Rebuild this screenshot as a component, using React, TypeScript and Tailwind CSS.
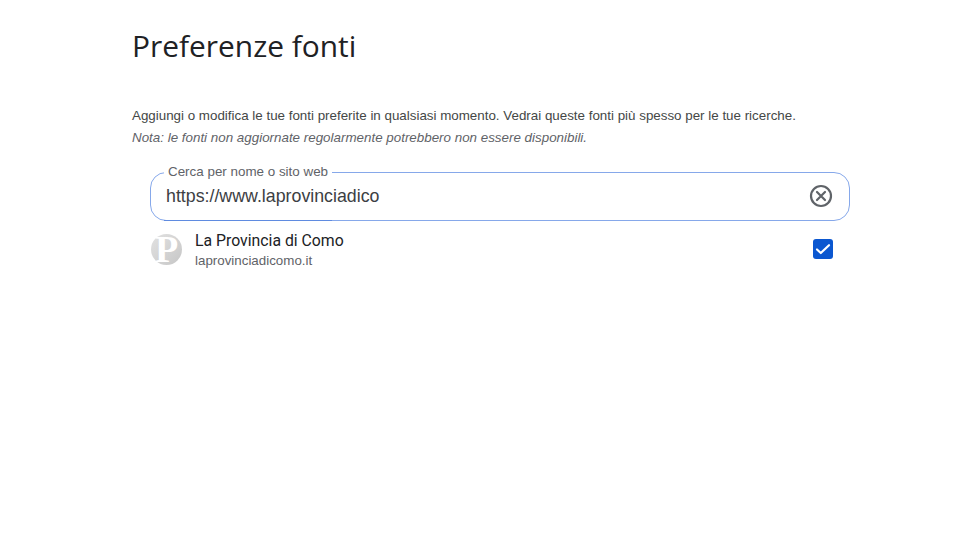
import React from 'react'

function ClearIcon() {
  return (
    <svg width="24" height="24" viewBox="0 0 24 24" fill="none" stroke="#5f6368" strokeWidth="2.2" strokeLinecap="round">
      <circle cx="12" cy="12" r="10" />
      <path d="M8 8l8 8M16 8l-8 8" />
    </svg>
  )
}

function SourceLogo() {
  return (
    <div className="w-[31px] h-[31px] rounded-full bg-gradient-to-br from-[#e2e2e2] to-[#c6c6c6] flex items-center justify-center">
      <span className="font-['Liberation_Serif',serif] font-bold text-[38px] leading-[31px] text-white">P</span>
    </div>
  )
}

export default function App() {
  return (
    <div className="min-h-[544px] bg-white pl-[132px] pr-[118px] pt-[25px] font-['Liberation_Sans',Arial,sans-serif]">
      <h1 className="font-['Open_Sans',sans-serif] text-[29.9px] leading-[42px] text-[#202124]">Preferenze fonti</h1>
      <p className="mt-[39px] text-[13.36px] leading-[20px] text-[#444746]">
        Aggiungi o modifica le tue fonti preferite in qualsiasi momento. Vedrai queste fonti più spesso per le tue ricerche.
      </p>
      <p className="mt-[2px] text-[13.38px] leading-[20px] italic text-[#5f6368]">
        Nota: le fonti non aggiornate regolarmente potrebbero non essere disponibili.
      </p>
      <div className="ml-[18px] mt-[16px]">
        <div className="relative">
          <fieldset className="h-[57px] rounded-[16px] border-[1.5px] border-[#86a8ea] pl-[13px] pr-[16px] flex items-center">
            <legend className="ml-0 px-[4px] text-[13.4px] leading-[16px] text-[#5f6368]">Cerca per nome o sito web</legend>
            <div className="flex w-full items-center justify-between -mt-[9px]">
              <span className="pl-[2px] text-[17.8px] leading-[24px] text-[#3c4043]">https://www.laprovinciadico</span>
              <ClearIcon />
            </div>
          </fieldset>
          <div className="absolute left-[14px] bottom-0 w-[168px] h-[1px] bg-[#5f8be0]" />
        </div>
        <div className="mt-[3px] ml-[1px] flex items-center pr-[17px] h-[50px]">
          <SourceLogo />
          <div className="ml-[13px] flex-1 pt-[3px]">
            <div className="text-[15.8px] leading-[20px] font-['Roboto',sans-serif] text-[#202124]">La Provincia di Como</div>
            <div className="mt-[1px] text-[13.35px] leading-[18px] text-[#5f6368]">laprovinciadicomo.it</div>
          </div>
          <div className="w-[20px] h-[20px] rounded-[3px] bg-[#0b57d0] flex items-center justify-center">
            <svg width="16" height="16" viewBox="0 0 16 16" fill="none" stroke="white" strokeWidth="2.2" strokeLinecap="round" strokeLinejoin="round">
              <path d="M2 8.5l3.8 3.5L14 4.2" />
            </svg>
          </div>
        </div>
      </div>
    </div>
  )
}
